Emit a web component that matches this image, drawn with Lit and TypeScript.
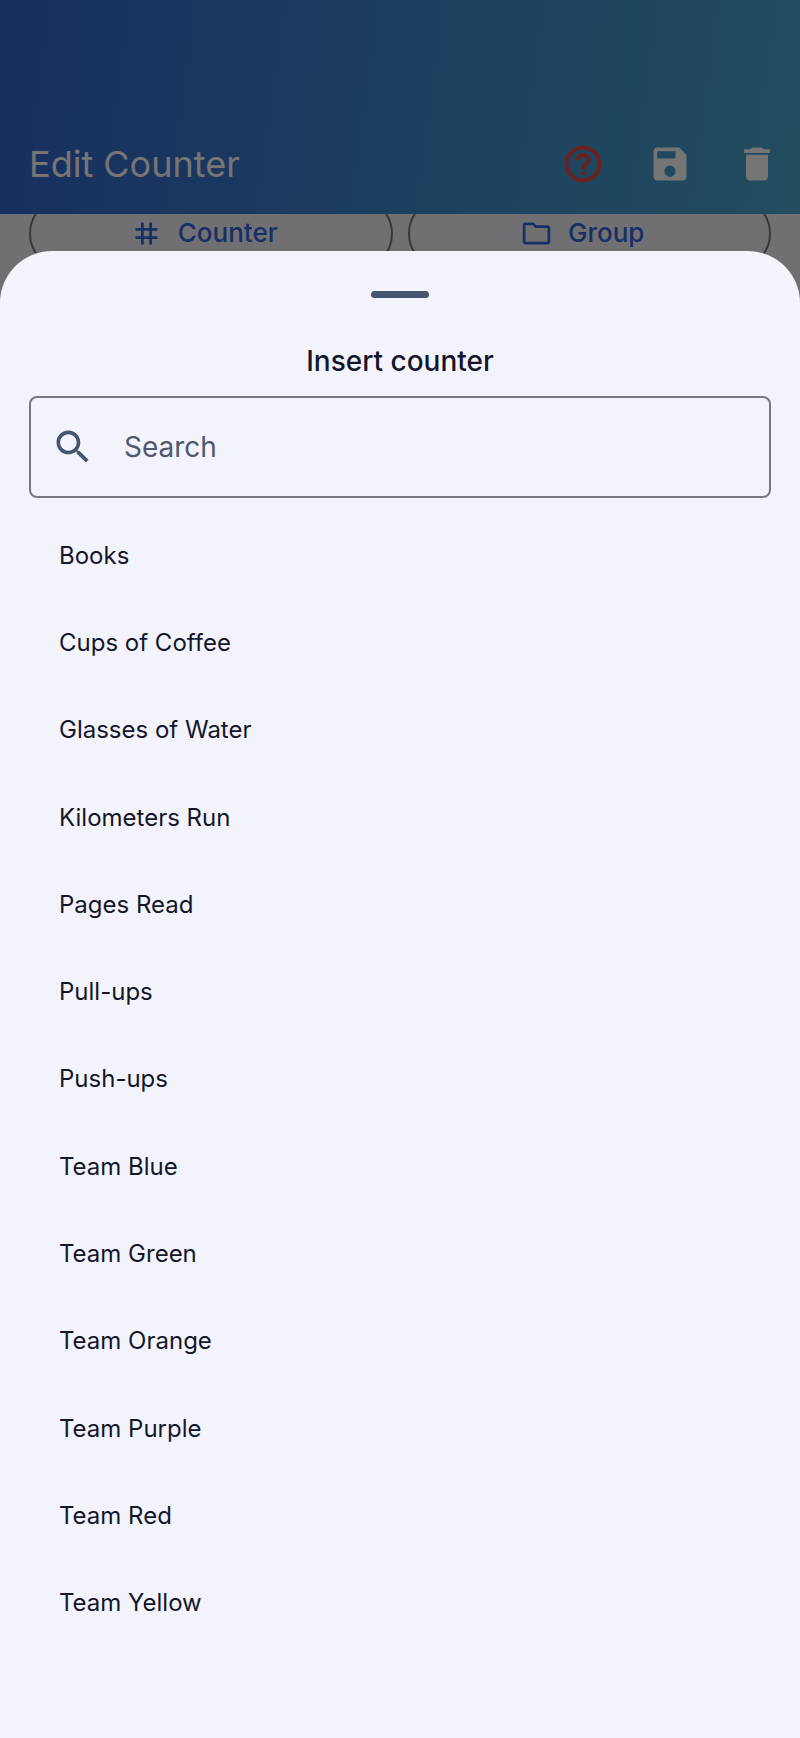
import { LitElement, html, css, svg } from "lit";
import { customElement, property, state } from "lit/decorators.js";

const ICONS: Record<string, string> = {
  help: "M11 18h2v-2h-2v2zm1-16C6.480 2 2 6.480 2 12s4.480 10 10 10 10-4.480 10-10S17.520 2 12 2zm0 18c-4.410 0-8-3.590-8-8s3.590-8 8-8 8 3.590 8 8-3.590 8-8 8zm0-14c-2.210 0-4 1.790-4 4h2c0-1.100.9-2 2-2s2 .9 2 2c0 2-3 1.750-3 5h2c0-2.250 3-2.500 3-5 0-2.210-1.790-4-4-4z",
  save: "M17 3H5c-1.110 0-2 .9-2 2v14c0 1.100.890 2 2 2h14c1.100 0 2-.9 2-2V7l-4-4zm-5 16c-1.660 0-3-1.340-3-3s1.340-3 3-3 3 1.340 3 3-1.340 3-3 3zm3-10H5V5h10v4z",
  trash: "M6 19c0 1.100.9 2 2 2h8c1.100 0 2-.9 2-2V7H6v12zM19 4h-3.500l-.7-.7c-.2-.2-.5-.3-.7-.3H9.900c-.3 0-.5.1-.7.3l-.7.7H5v2h14V4z",
  tag: "M20 10V8h-4V4h-2v4h-4V4H8v4H4v2h4v4H4v2h4v4h2v-4h4v4h2v-4h4v-2h-4v-4h4zm-6 4h-4v-4h4v4z",
  folder: "M9.170 6l2 2H20v10H4V6h5.170M10 4H4c-1.100 0-1.990.9-1.990 2L2 18c0 1.100.9 2 2 2h16c1.100 0 2-.9 2-2V8c0-1.100-.9-2-2-2h-8l-2-2z",
  search: "M15.500 14h-.790l-.280-.270C15.410 12.590 16 11.110 16 9.500 16 5.910 13.090 3 9.500 3S3 5.910 3 9.500 5.910 16 9.500 16c1.610 0 3.090-.590 4.230-1.570l.270.280v.790l5 4.990L20.490 19l-4.990-5zm-6 0C7.010 14 5 11.990 5 9.500S7.010 5 9.500 5 14 7.010 14 9.500 11.990 14 9.500 14z",
};

@customElement("mat-icon")
export class MatIcon extends LitElement {
  @property() name = "";

  static styles = css`
    :host {
      display: block;
      flex: none;
      width: 44px;
      height: 44px;
    }
    .glyph {
      display: block;
      width: 100%;
      height: 100%;
      fill: currentColor;
    }
  `;

  render() {
    return html`<svg class="glyph" viewBox="0 0 24 24" aria-hidden="true">
      ${svg`<path d=${ICONS[this.name] ?? ""}></path>`}
    </svg>`;
  }
}

@customElement("edit-screen")
export class EditScreen extends LitElement {
  static styles = css`
    :host {
      display: block;
      background: #f3f4fb;
    }
    .bar {
      box-sizing: border-box;
      display: flex;
      align-items: flex-end;
      justify-content: space-between;
      height: 214px;
      padding: 0 21px 28px 29px;
      background: linear-gradient(98deg, #3466d0, #3d88d0, #4ca7cf);
      color: #fff;
    }
    .title {
      margin: 0;
      font-size: 36px;
      line-height: 44px;
      font-weight: 400;
    }
    .actions {
      display: flex;
      gap: 43px;
    }
    .action {
      padding: 0;
      border: 0;
      background: none;
      color: inherit;
    }
    .help {
      color: #f8443a;
    }
    .body {
      display: flex;
      gap: 15px;
      height: 60px;
      padding: 0 29px;
      overflow: hidden;
      align-items: center;
    }
    .pill {
      flex: 1;
      display: flex;
      align-items: center;
      justify-content: center;
      gap: 15px;
      height: 73px;
      margin-top: -22px;
      padding: 0 14px 0 0;
      border: 2px solid #777a80;
      border-radius: 37px;
      background: none;
      color: #3566dc;
      font: 500 26px/32px Inter, sans-serif;
    }
    .small {
      width: 33px;
      height: 33px;
    }
  `;

  render() {
    return html`
      <header class="bar">
        <h1 class="title">Edit Counter</h1>
        <div class="actions">
          <button class="action help" aria-label="Help"><mat-icon name="help"></mat-icon></button>
          <button class="action" aria-label="Save"><mat-icon name="save"></mat-icon></button>
          <button class="action" aria-label="Delete"><mat-icon name="trash"></mat-icon></button>
        </div>
      </header>
      <div class="body">
        <button class="pill"><mat-icon class="small" name="tag"></mat-icon>Counter</button>
        <button class="pill"><mat-icon class="small" name="folder"></mat-icon>Group</button>
      </div>
    `;
  }
}

@customElement("counter-sheet")
export class CounterSheet extends LitElement {
  @property({ attribute: false }) counters: string[] = [];
  @state() private query = "";

  static styles = css`
    :host {
      box-sizing: border-box;
      display: flex;
      flex-direction: column;
      padding: 40px 29px 91px;
      border-radius: 52px 52px 0 0;
      background: #f3f4fb;
      color: #14172b;
    }
    .handle {
      align-self: center;
      width: 58px;
      height: 7px;
      border-radius: 4px;
      background: #475670;
    }
    .heading {
      margin: 43px 0 15px;
      font-size: 28px;
      line-height: 40px;
      font-weight: 500;
      text-align: center;
    }
    .field {
      display: flex;
      align-items: center;
      gap: 29px;
      padding: 0 20px;
      border: 2px solid #77797f;
      border-radius: 8px;
      color: #475670;
    }
    .input {
      flex: 1;
      min-width: 0;
      height: 98px;
      padding: 0;
      border: 0;
      outline: 0;
      background: none;
      color: inherit;
      font: 400 28px/36px Inter, sans-serif;
    }
    .input::placeholder {
      color: #50586f;
      opacity: 1;
    }
    .list {
      flex: 1;
      display: grid;
      grid-auto-rows: minmax(87px, 1fr);
      margin: 14px 0 0;
      padding: 0;
      list-style: none;
    }
    .item {
      display: grid;
    }
    .option {
      padding: 0 30px;
      border: 0;
      background: none;
      color: inherit;
      font: 400 24px/32px Inter, sans-serif;
      text-align: left;
    }
  `;

  private onInput(e: Event) {
    this.query = (e.target as HTMLInputElement).value;
  }

  render() {
    const q = this.query.toLowerCase();
    const shown = this.counters.filter((c) => c.toLowerCase().includes(q));
    return html`
      <div class="handle"></div>
      <h2 class="heading">Insert counter</h2>
      <label class="field">
        <mat-icon name="search"></mat-icon>
        <input class="input" type="text" placeholder="Search" aria-label="Search" @input=${this.onInput} />
      </label>
      <ul class="list">
        ${shown.map((c) => html`<li class="item"><button class="option">${c}</button></li>`)}
      </ul>
    `;
  }
}

@customElement("app-root")
export class AppRoot extends LitElement {
  private counters = [
    "Books",
    "Cups of Coffee",
    "Glasses of Water",
    "Kilometers Run",
    "Pages Read",
    "Pull-ups",
    "Push-ups",
    "Team Blue",
    "Team Green",
    "Team Orange",
    "Team Purple",
    "Team Red",
    "Team Yellow",
  ];

  static styles = css`
    :host {
      display: grid;
      min-height: 100vh;
      font-family: Inter, sans-serif;
    }
    .screen,
    .scrim {
      grid-area: 1 / 1;
    }
    .scrim {
      z-index: 1;
      display: grid;
      padding-top: 251px;
      background: rgba(0, 0, 0, 0.54);
    }
  `;

  render() {
    return html`
      <edit-screen class="screen"></edit-screen>
      <div class="scrim">
        <counter-sheet role="dialog" aria-label="Insert counter" .counters=${this.counters}></counter-sheet>
      </div>
    `;
  }
}
